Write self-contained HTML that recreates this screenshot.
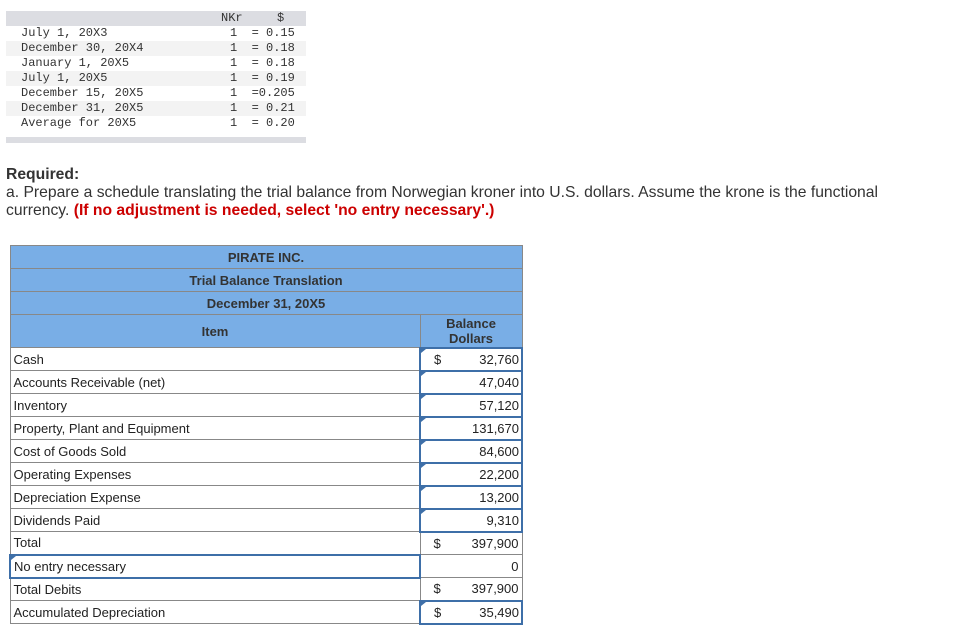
<!DOCTYPE html>
<html><head><style>
body{margin:0;background:#fff;width:957px;height:633px;overflow:hidden;position:relative;font-family:"Liberation Sans",Arial,sans-serif}
.mono{position:absolute;left:6px;top:11px;width:300px;font-family:"Liberation Mono",monospace;font-size:12px;color:#333}
.mono div{height:15px;line-height:15px;position:relative}
.mono .h{background:#dcdde2}
.mono .g{background:#f3f3f3}
.mono span{position:absolute;white-space:pre}
.req{position:absolute;left:6px;top:166px;font-size:15.7px;color:#333;line-height:18px;white-space:nowrap}
.red{color:#c00;font-weight:bold}
table{position:absolute;left:9px;top:245px;border-collapse:collapse;font-size:13px;color:#222}
td{border:1px solid #888;height:23px;padding:0 3px;box-sizing:border-box}
.bl{background:#79aee6;text-align:center;color:#222;font-weight:bold;color:#333}
.in{border:2px solid #3e6fa8;position:relative;text-align:right;padding-right:2px}
.in:before{content:"";position:absolute;left:0;top:0;border-left:5px solid #3e6fa8;border-bottom:4px solid transparent}
</style></head><body>
<div class="mono">
<div class="h"><span style="left:215px">NKr</span><span style="left:271px">$</span></div>
<div><span style="left:15px">July 1, 20X3</span><span style="left:224px">1  = 0.15</span></div>
<div class="g"><span style="left:15px">December 30, 20X4</span><span style="left:224px">1  = 0.18</span></div>
<div><span style="left:15px">January 1, 20X5</span><span style="left:224px">1  = 0.18</span></div>
<div class="g"><span style="left:15px">July 1, 20X5</span><span style="left:224px">1  = 0.19</span></div>
<div><span style="left:15px">December 15, 20X5</span><span style="left:224px">1  =0.205</span></div>
<div class="g"><span style="left:15px">December 31, 20X5</span><span style="left:224px">1  = 0.21</span></div>
<div><span style="left:15px">Average for 20X5</span><span style="left:224px">1  = 0.20</span></div>
<div style="height:6px;margin-top:6px;background:#dcdde2"></div>
</div>
<div class="req"><b>Required:</b><br>a. Prepare a schedule translating the trial balance from Norwegian kroner into U.S. dollars. Assume the krone is the functional<br>currency. <span class="red">(If no adjustment is needed, select 'no entry necessary'.)</span></div>
<table>
<tr><td colspan="2" class="bl" style="width:512px">PIRATE INC.</td></tr>
<tr><td colspan="2" class="bl">Trial Balance Translation</td></tr>
<tr><td colspan="2" class="bl">December 31, 20X5</td></tr>
<tr><td class="bl" style="width:410px;height:33px">Item</td><td class="bl" style="width:102px;line-height:15px;height:33px">Balance<br>Dollars</td></tr>
<tr><td>Cash</td><td class="in"><span style="float:left;margin-left:10px">$</span>32,760</td></tr>
<tr><td>Accounts Receivable (net)</td><td class="in">47,040</td></tr>
<tr><td>Inventory</td><td class="in">57,120</td></tr>
<tr><td>Property, Plant and Equipment</td><td class="in">131,670</td></tr>
<tr><td>Cost of Goods Sold</td><td class="in">84,600</td></tr>
<tr><td>Operating Expenses</td><td class="in">22,200</td></tr>
<tr><td>Depreciation Expense</td><td class="in">13,200</td></tr>
<tr><td>Dividends Paid</td><td class="in">9,310</td></tr>
<tr><td>Total</td><td style="text-align:right"><span style="float:left;margin-left:10px">$</span>397,900</td></tr>
<tr><td class="in" style="text-align:left">No entry necessary</td><td style="text-align:right">0</td></tr>
<tr><td>Total Debits</td><td style="text-align:right"><span style="float:left;margin-left:10px">$</span>397,900</td></tr>
<tr><td>Accumulated Depreciation</td><td class="in"><span style="float:left;margin-left:10px">$</span>35,490</td></tr>
</table>
</body></html>
